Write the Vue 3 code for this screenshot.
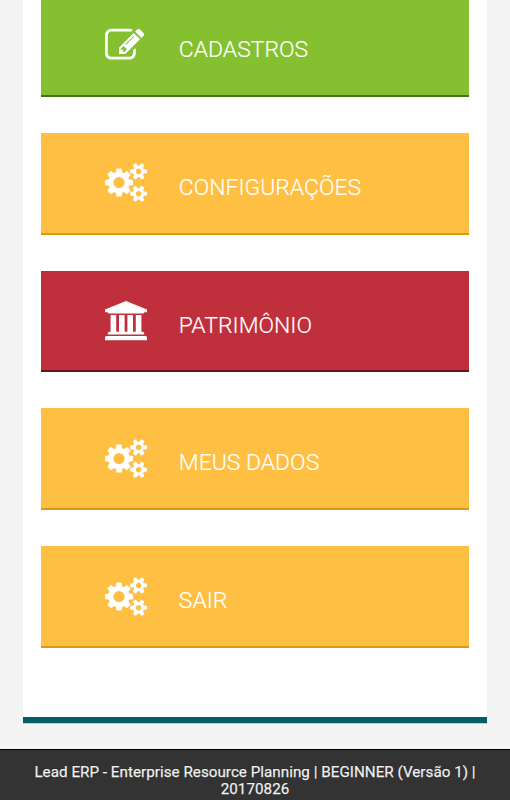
<script setup>
const icons = {
  edit: 'M888 1184l116-116-152-152-116 116v56h96v96h56zm440-720q-16-16-33 1l-350 350q-17 17-1 33t33-1l350-350q17-17 1-33zm80 594v190q0 119-84.5 203.5t-203.5 84.5h-832q-119 0-203.5-84.5t-84.5-203.5v-832q0-119 84.5-203.5t203.5-84.5h832q63 0 117 25 15 7 18 23 3 17-9 29l-49 49q-14 14-32 8-23-6-45-6h-832q-66 0-113 47t-47 113v832q0 66 47 113t113 47h832q66 0 113-47t47-113v-126q0-13 9-22l64-64q15-15 35-7t20 29zm-96-738l288 288-672 672h-288v-288zm444 132l-92 92-288-288 92-92q28-28 68-28t68 28l152 152q28 28 28 68t-28 68z',
  cogs: 'M832 896q0-106-75-181t-181-75-181 75-75 181 75 181 181 75 181-75 75-181zm768 512q0-52-38-90t-90-38-90 38-38 90q0 53 37.5 90.5t90.5 37.5 90.5-37.5 37.5-90.5zm0-1024q0-52-38-90t-90-38-90 38-38 90q0 53 37.5 90.5t90.5 37.5 90.5-37.5 37.5-90.5zm-384 421v185q0 10-7 19.5t-16 10.5l-155 24q-11 35-32 76 34 48 90 115 7 11 7 20 0 12-7 19-23 30-82.5 89.5t-78.5 59.5q-11 0-21-7l-115-90q-37 19-77 31-11 108-23 155-7 24-30 24h-186q-11 0-20-7.5t-10-17.5l-23-153q-34-10-75-31l-118 89q-7 7-20 7-11 0-21-8-144-133-144-160 0-9 7-19 10-14 41-53t47-61q-23-44-35-82l-152-24q-10-1-17-9.5t-7-19.5v-185q0-10 7-19.5t16-10.5l155-24q11-35 32-76-34-48-90-115-7-11-7-20 0-12 7-20 22-30 82-89t79-59q11 0 21 7l115 90q34-18 77-32 11-108 23-154 7-24 30-24h186q11 0 20 7.5t10 17.5l23 153q34 10 75 31l118-89q8-7 20-7 11 0 21 8 144 133 144 160 0 8-7 19-12 16-42 54t-45 60q23 48 34 82l152 23q10 2 17 10.5t7 19.5zm640 533v140q0 16-149 31-12 27-30 52 51 113 51 138 0 4-4 7-122 71-124 71-8 0-46-47t-52-68q-20 2-30 2t-30-2q-14 21-52 68t-46 47q-2 0-124-71-4-3-4-7 0-25 51-138-18-25-30-52-149-15-149-31v-140q0-16 149-31 13-29 30-52-51-113-51-138 0-4 4-7 4-2 35-20t59-34 30-16q8 0 46 46.5t52 67.5q20-2 30-2t30 2q51-71 92-112l6-2q4 0 124 70 4 3 4 7 0 25-51 138 17 23 30 52 149 15 149 31zm0-1024v140q0 16-149 31-12 27-30 52 51 113 51 138 0 4-4 7-122 71-124 71-8 0-46-47t-52-68q-20 2-30 2t-30-2q-14 21-52 68t-46 47q-2 0-124-71-4-3-4-7 0-25 51-138-18-25-30-52-149-15-149-31v-140q0-16 149-31 13-29 30-52-51-113-51-138 0-4 4-7 4-2 35-20t59-34 30-16q8 0 46 46.5t52 67.5q20-2 30-2t30 2q51-71 92-112l6-2q4 0 124 70 4 3 4 7 0 25-51 138 17 23 30 52 149 15 149 31z',
  bank: 'M960 0l960 384v128h-128q0 26-20.5 45t-48.5 19h-1526q-28 0-48.5-19t-20.5-45h-128v-128zm-704 640h256v768h128v-768h256v768h128v-768h256v768h128v-768h256v768h59q28 0 48.5 19t20.5 45v64h-1664v-64q0-26 20.5-45t48.5-19h59v-768zm1595 960q28 0 48.5 19t20.5 45v128h-1920v-128q0-26 20.5-45t48.5-19h1782z',
}

const viewBoxes = {
  edit: '0 0 1920 1792',
  cogs: '-64 0 1920 1792',
  bank: '0 0 1920 1792',
}

const items = [
  { label: 'CADASTROS', icon: 'edit', tone: 'green' },
  { label: 'CONFIGURAÇÕES', icon: 'cogs', tone: 'amber' },
  { label: 'PATRIMÔNIO', icon: 'bank', tone: 'red' },
  { label: 'MEUS DADOS', icon: 'cogs', tone: 'amber' },
  { label: 'SAIR', icon: 'cogs', tone: 'amber' },
]
</script>

<template>
  <div class="page">
    <main class="panel">
      <nav class="menu">
        <a v-for="item in items" :key="item.label" class="tile" :class="item.tone">
          <svg class="icon" :viewBox="viewBoxes[item.icon]" aria-hidden="true">
            <path :d="icons[item.icon]" />
          </svg>
          <span class="label">{{ item.label }}</span>
        </a>
      </nav>
    </main>
    <footer class="footer">
      Lead ERP - Enterprise Resource Planning | BEGINNER (Versão 1) | 20170826
    </footer>
  </div>
</template>

<style>
body {
  margin: 0;
  background: #f4f4f4;
}
</style>

<style scoped>
.page {
  box-sizing: border-box;
  display: flex;
  flex-direction: column;
  height: 800px;
  overflow: hidden;
  background: #f4f4f4;
  font-family: Roboto, "Liberation Sans", sans-serif;
}
.panel {
  box-sizing: border-box;
  flex: none;
  height: 723px;
  margin: 0 23px;
  padding: 0 18px;
  overflow: hidden;
  background: #fff;
  border-bottom: 6px solid #006064;
  box-shadow: 0 1px 0 #c5cccd;
}
.menu {
  display: flex;
  flex-direction: column;
  gap: 35.95px;
  margin-top: -4.95px;
}
.tile {
  box-sizing: border-box;
  display: flex;
  flex: none;
  align-items: flex-start;
  height: 101.8px;
  padding: 30.6px 0 0 64.2px;
  color: #fff;
  border-bottom: 2px solid;
}
.green {
  background: #84c02f;
  border-color: #457615;
}
.amber {
  background: #ffbf43;
  border-color: #e0960f;
}
.red {
  background: #c0303c;
  border-color: #64151b;
}
.icon {
  flex: none;
  width: 42px;
  height: 39.2px;
  overflow: visible;
  fill: #fff;
}
.label {
  margin: 10.6px 0 0 31.6px;
  font-size: 22.95px;
  font-weight: 300;
  line-height: 28px;
  white-space: nowrap;
  -webkit-text-stroke: 0.15px #fff;
}
.footer {
  box-sizing: border-box;
  flex: none;
  height: 51px;
  margin-top: 26px;
  padding: 14px 20px 0;
  background: #333;
  border-top: 1px solid #000;
  color: #f2f2f2;
  font-size: 15.2px;
  line-height: 16.5px;
  letter-spacing: 0.03px;
  text-align: center;
  text-shadow: 0 0 1px #000;
  -webkit-text-stroke: 0.25px #f2f2f2;
}
</style>
